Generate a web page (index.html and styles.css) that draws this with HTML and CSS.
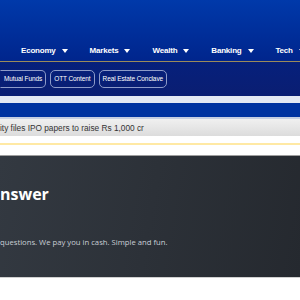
FILE: index.html
```html
<!DOCTYPE html>
<html lang="en">
<head>
<meta charset="UTF-8" />
<meta name="viewport" content="width=device-width, initial-scale=1.0"/>
<title>News</title>
<link rel="stylesheet" href="styles.css">
</head>
<body>

<div class="masthead">
    <nav class="main-nav">
        <a class="nav-item">Economy <span class="caret"></span></a>
        <a class="nav-item">Markets <span class="caret"></span></a>
        <a class="nav-item">Wealth <span class="caret"></span></a>
        <a class="nav-item">Banking <span class="caret"></span></a>
        <a class="nav-item">Tech <span class="caret"></span></a>
    </nav>
</div>
<div class="sub-nav">
    <span class="pill">Mutual Funds</span>
    <span class="pill">OTT Content</span>
    <span class="pill">Real Estate Conclave</span>
</div>

<div class="strip"></div>

<div class="ticker">
    <p class="ticker-text">ity files IPO papers to raise Rs 1,000 cr</p>
</div>

<div class="notice"></div>

<section class="promo">
    <h2 class="promo-title">nswer</h2>
    <p class="promo-desc">questions. We pay you in cash. Simple and fun.</p>
</section>

</body>
</html>
```

FILE: styles.css
```css
body {
    margin: 0;
    width: 300px;
    overflow: hidden;
    background: #fff;
    font-family: "Liberation Sans", Arial, sans-serif;
}

.masthead {
    height: 61px;
    background: linear-gradient(#0039aa, #00258c);
    border-bottom: 1px solid #9c8a5a;
    display: flex;
    align-items: flex-end;
}

.main-nav {
    display: flex;
    padding: 0 0 6px 21px;
    gap: 22px;
}

.nav-item {
    color: #fff;
    font-size: 8px;
    font-weight: bold;
    letter-spacing: -0.2px;
    display: flex;
    align-items: center;
    gap: 6px;
    white-space: nowrap;
}

.caret {
    width: 0;
    height: 0;
    border-left: 3.5px solid transparent;
    border-right: 3.5px solid transparent;
    border-top: 4px solid #fff;
}

.sub-nav {
    height: 34px;
    background: linear-gradient(#06207c, #0a1e72);
    display: flex;
    align-items: center;
    gap: 4px;
}

.pill {
    height: 16px;
    line-height: 16px;
    padding: 0 3px;
    border: 1px solid #8d9bc9;
    border-radius: 5px;
    color: #fff;
    font-size: 6.5px;
    letter-spacing: -0.1px;
    white-space: nowrap;
}

.sub-nav .pill:first-child {
    border-left-color: transparent;
    border-radius: 0 5px 5px 0;
}

.strip {
    height: 14px;
    background: #0033a0;
    border-top: 7px solid #e4e9f3;
    border-bottom: 2px solid #c6cfe2;
}

.ticker {
    height: 17px;
    background: linear-gradient(#f0f0f0, #dcdcdc);
    display: flex;
    align-items: center;
}

.ticker-text {
    margin: 1px 0 0 0;
    font-size: 8.3px;
    color: #333;
    white-space: nowrap;
}

.notice {
    height: 19px;
    background: linear-gradient(#fff 7px, #ffe9a4 7px, #ffe9a4 9px, #fff 9px);
    border-bottom: 1px solid #a0a0a0;
}

.promo {
    height: 122px;
    background: linear-gradient(100deg, #333941, #25292f);
    border-bottom: 1px solid #d0d0d0;
    box-shadow: 0 1px 2px rgba(0,0,0,0.15);
    font-family: "Open Sans", sans-serif;
    padding-top: 28px;
    box-sizing: border-box;
}

.promo-title {
    margin: 0;
    color: #fff;
    font-size: 16px;
    font-weight: bold;
    line-height: 20px;
}

.promo-desc {
    margin: 33px 0 0 0;
    color: #c9ced6;
    font-size: 7.7px;
}
```
